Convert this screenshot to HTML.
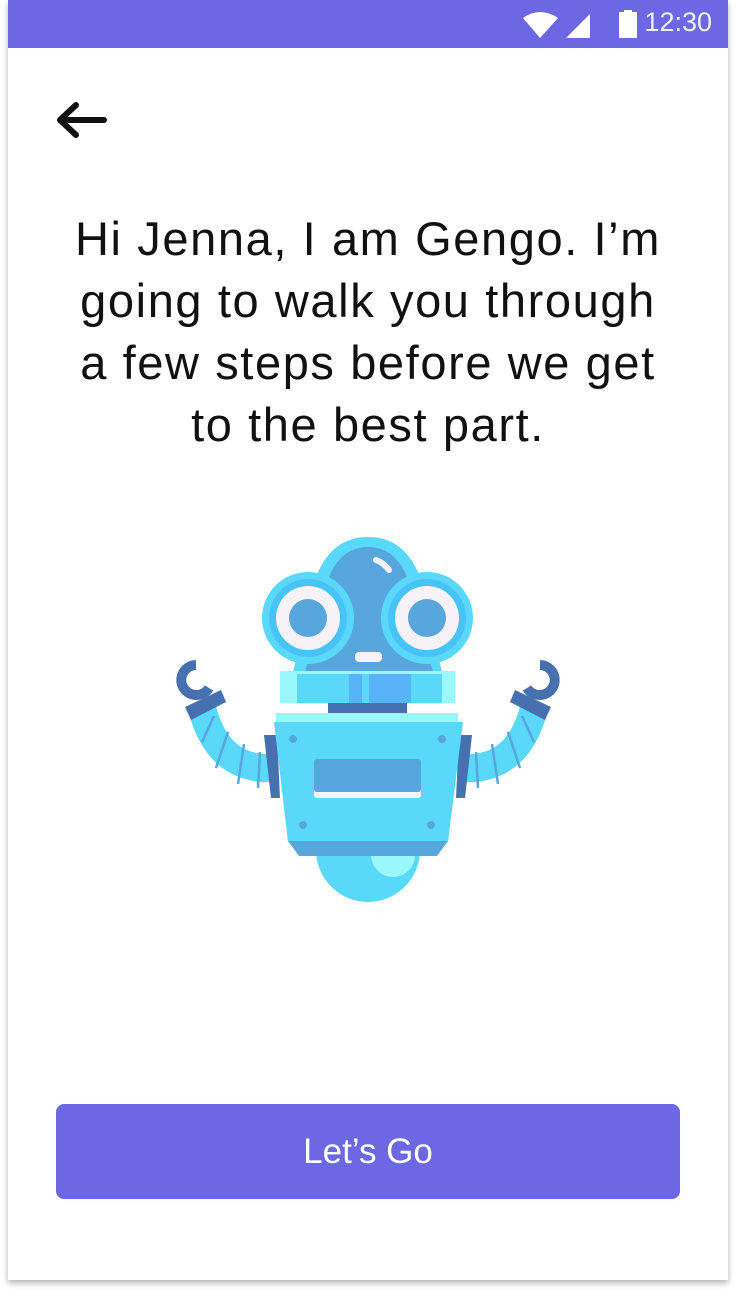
<!DOCTYPE html>
<html><head><style>
body{margin:0;width:736px;height:1296px;background:#fff;position:relative;overflow:hidden;font-family:"Liberation Sans",sans-serif}
.card{position:absolute;left:8px;top:0;width:720px;height:1280px;background:#fff;box-shadow:0 3px 6px rgba(0,0,0,.3)}
.sb{position:absolute;left:0;top:0;width:720px;height:48px;background:#6c68e4}
.time{position:absolute;right:16px;top:7px;color:#eeeefa;font-size:27px}
h1{position:absolute;left:0;top:208px;width:720px;margin:0;text-align:center;font-weight:normal;font-size:47px;letter-spacing:1.6px;line-height:62px;color:#111}
.btn{position:absolute;left:48px;top:1104px;width:624px;height:95px;background:#6c68e4;border-radius:8px;color:#fff;font-size:35px;text-align:center;line-height:95px}
</style></head><body>
<div class="card">
<div class="sb">
<svg style="position:absolute;left:512px;top:10px" width="130" height="30">
<path d="M3 8 Q20 -4 38 8 L20 28 Z" fill="#fff"/>
<path d="M46 28 L70 4 L70 28 Z" fill="#fff"/>
<rect x="99" y="2" width="18" height="26" fill="#fff"/><rect x="104" y="0" width="8" height="3" fill="#fff"/>
</svg>
<div class="time">12:30</div>
</div>
<svg style="position:absolute;left:46px;top:100px" width="56" height="40"><path d="M50 20 H8 M22 5 L6 20 L22 35" stroke="#111" stroke-width="6" fill="none" stroke-linecap="round" stroke-linejoin="round"/></svg>
<h1>Hi Jenna, I am Gengo. I’m<br>going to walk you through<br>a few steps before we get<br>to the best part.</h1>
<svg style="position:absolute;left:-8px;top:0" width="736" height="1000">
<path d="M276 768 Q218 772 202 708" stroke="#5ad8fa" stroke-width="28" fill="none"/>
<path d="M460 768 Q518 772 534 708" stroke="#5ad8fa" stroke-width="28" fill="none"/>
<g stroke="#57a7dd" stroke-width="2.5"><line x1="260" y1="752" x2="258" y2="788"/><line x1="244" y1="744" x2="238" y2="784"/><line x1="228" y1="732" x2="216" y2="768"/><line x1="214" y1="716" x2="202" y2="742"/><line x1="476" y1="752" x2="478" y2="788"/><line x1="492" y1="744" x2="498" y2="784"/><line x1="508" y1="732" x2="520" y2="768"/><line x1="522" y1="716" x2="534" y2="742"/></g>
<path d="M185 707 L221 690 L226 702 L191 720 Z" fill="#4670b0"/>
<path d="M551 707 L515 690 L510 702 L545 720 Z" fill="#4670b0"/>
<path d="M196 665 A15 15 0 1 0 209 688" stroke="#4670b0" stroke-width="10" fill="none"/>
<path d="M540 665 A15 15 0 1 1 527 688" stroke="#4670b0" stroke-width="10" fill="none"/>
<circle cx="368" cy="850" r="52" fill="#5ad8fa"/>
<circle cx="393" cy="855" r="22" fill="#98f8fb"/>
<path d="M264 735 L277 735 L280 798 L271 798 Z" fill="#4670b0"/>
<path d="M472 735 L459 735 L456 798 L465 798 Z" fill="#4670b0"/>
<path d="M276 713 H458 V722 H276 Z" fill="#98f8fb"/>
<path d="M274 722 H463 L448 842 H288 Z" fill="#5ad8fa"/>
<path d="M288 841 H448 L437 856 H299 Z" fill="#57a7dd"/>
<rect x="314" y="762" width="107" height="36" rx="3" fill="#f7f1f8"/>
<rect x="314" y="759" width="107" height="33" rx="3" fill="#57a7dd"/>
<g fill="#57a7dd"><circle cx="293" cy="739" r="4"/><circle cx="442" cy="739" r="4"/><circle cx="303" cy="825" r="4"/><circle cx="431" cy="825" r="4"/></g>
<rect x="328" y="703" width="79" height="10" fill="#4670b0"/>
<path d="M315 580 Q330 537 368 537 Q406 537 421 580 L442 672 H293 Z" fill="#5ad8fa"/>
<path d="M326 585 Q338 547 368 547 Q398 547 410 585 L433 672 H305 Z" fill="#57a7dd"/>
<path d="M376 560 Q384 563 389 570" stroke="#f7f1f8" stroke-width="6" stroke-linecap="round" fill="none"/>
<rect x="280" y="671" width="175" height="32" fill="#98f8fb"/>
<rect x="297" y="674" width="145" height="29" fill="#5ad8fa"/>
<rect x="349" y="674" width="13" height="29" fill="#57b2f8"/>
<rect x="369" y="674" width="42" height="29" fill="#57b2f8"/>
<g><circle cx="308" cy="618" r="46" fill="#5ad8fa"/><circle cx="308" cy="618" r="39" fill="#48c3f8"/><circle cx="308" cy="618" r="32" fill="#f7f1f8"/><circle cx="308" cy="618" r="19" fill="#57a7dd"/></g>
<g><circle cx="427" cy="618" r="46" fill="#5ad8fa"/><circle cx="427" cy="618" r="39" fill="#48c3f8"/><circle cx="427" cy="618" r="32" fill="#f7f1f8"/><circle cx="427" cy="618" r="19" fill="#57a7dd"/></g>
<rect x="355" y="652" width="27" height="10" rx="4" fill="#f7f1f8"/>
</svg>
<div class="btn">Let’s Go</div>
</div>
</body></html>
